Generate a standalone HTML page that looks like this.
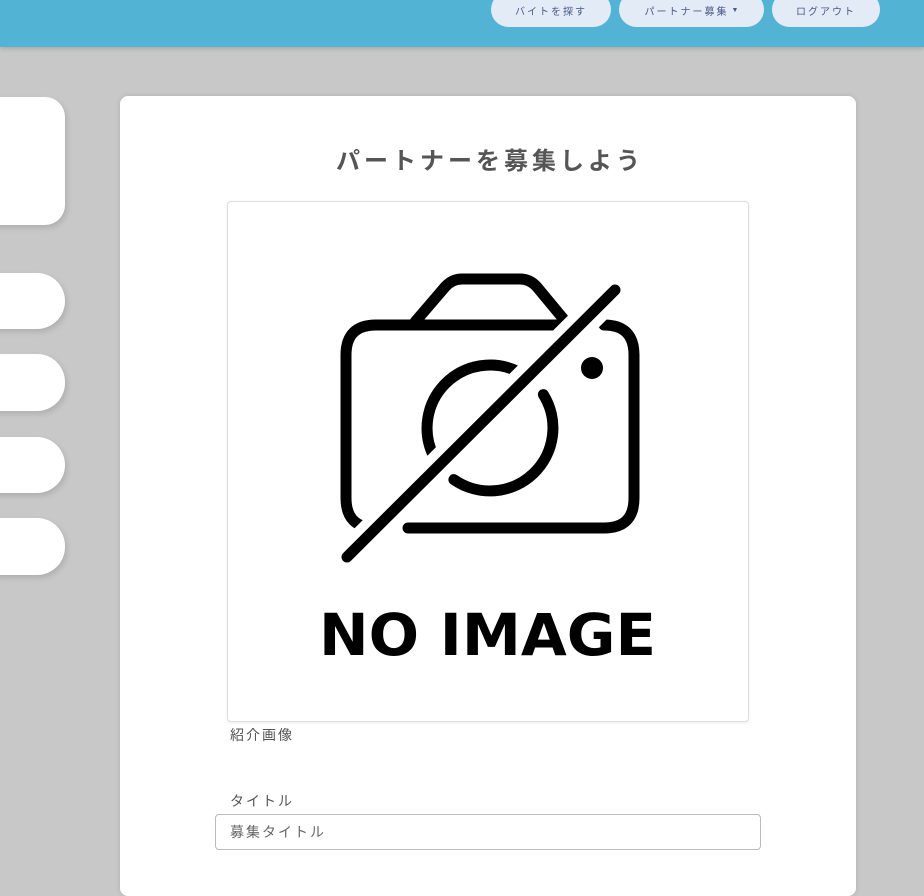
<!DOCTYPE html>
<html><head><meta charset="utf-8"><style>
*{box-sizing:border-box;margin:0;padding:0}
body{width:924px;height:875px;overflow:hidden;background:#c8c8c8;font-family:"Liberation Sans","Noto Sans CJK JP",sans-serif;position:relative}
.hdr{position:absolute;left:0;top:0;width:924px;height:47px;background:#53b3d5;box-shadow:0 2px 4px rgba(0,0,0,.15)}
.btn{position:absolute;top:-8px;height:35px;background:#e3ebf6;border-radius:18px;color:#4a5a86;font-size:10px;letter-spacing:2px;display:flex;align-items:center;justify-content:center;padding-top:2px}
.side{position:absolute;left:-30px;width:95px;background:#fff;box-shadow:2px 3px 6px rgba(0,0,0,.12)}
.card{position:absolute;left:120px;top:96px;width:736px;height:800px;background:#fff;border-radius:8px;box-shadow:0 0 6px rgba(0,0,0,.12)}
h1{position:absolute;left:0;width:736px;top:45px;text-align:center;font-size:24px;font-weight:bold;color:#555;letter-spacing:4px;padding-left:4px}
.img{position:absolute;left:107px;top:105px;width:522px;height:521px;border:1px solid #ddd;border-radius:4px;box-shadow:0 1px 3px rgba(0,0,0,.08)}
.lbl{position:absolute;left:110px;font-size:14px;color:#555;letter-spacing:2px}
.inp{position:absolute;left:95px;top:718px;width:546px;height:36px;border:1px solid #bbb;border-radius:4px;font-size:14px;color:#666;letter-spacing:2px;padding:7px 14px}
</style></head><body>
<div class="hdr">
<div class="btn" style="left:491px;width:120px">バイトを探す</div>
<div class="btn" style="left:619px;width:145px">パートナー募集 <span style="font-size:7px;letter-spacing:0;margin-left:3px">▼</span></div>
<div class="btn" style="left:772px;width:108px">ログアウト</div>
</div>
<div class="side" style="top:97px;height:128px;border-radius:20px"></div>
<div class="side" style="top:273px;height:56px;border-radius:28px"></div>
<div class="side" style="top:354px;height:57px;border-radius:28px"></div>
<div class="side" style="top:437px;height:56px;border-radius:28px"></div>
<div class="side" style="top:518px;height:57px;border-radius:28px"></div>
<div class="card">
<h1>パートナーを募集しよう</h1>
<div class="img"></div>
<div class="lbl" style="top:629px">紹介画像</div>
<div class="lbl" style="top:695px">タイトル</div>
<div class="inp">募集タイトル</div>
</div>
<svg style="position:absolute;left:0;top:0" width="924" height="875">
<g fill="none" stroke="#000" stroke-width="11" stroke-linecap="round" stroke-linejoin="round">
<path d="M573 325 H376 Q346 325 346 355 V498 Q346 528 376 528"/>
<path d="M408 528 H604 Q634 528 634 498 V355 Q634 325 604 325"/>
<path d="M415 322 L445 287 Q452 279 462 279 H520 Q530 279 537 287 L566 322"/>
<path d="M518.6 371.9 A63 63 0 0 0 433.9 456.6"/>
<path d="M543.4 394.6 A63 63 0 0 1 453.9 479.6"/>
</g>
<line x1="615" y1="290" x2="347" y2="557" stroke="#fff" stroke-width="30"/>
<line x1="615" y1="290" x2="347" y2="557" stroke="#000" stroke-width="11" stroke-linecap="round"/>
<circle cx="592" cy="368" r="11"/>
<text x="319" y="655" font-family="DejaVu Sans" font-weight="bold" font-size="58" textLength="337" lengthAdjust="spacingAndGlyphs">NO IMAGE</text>
</svg>
</body></html>
